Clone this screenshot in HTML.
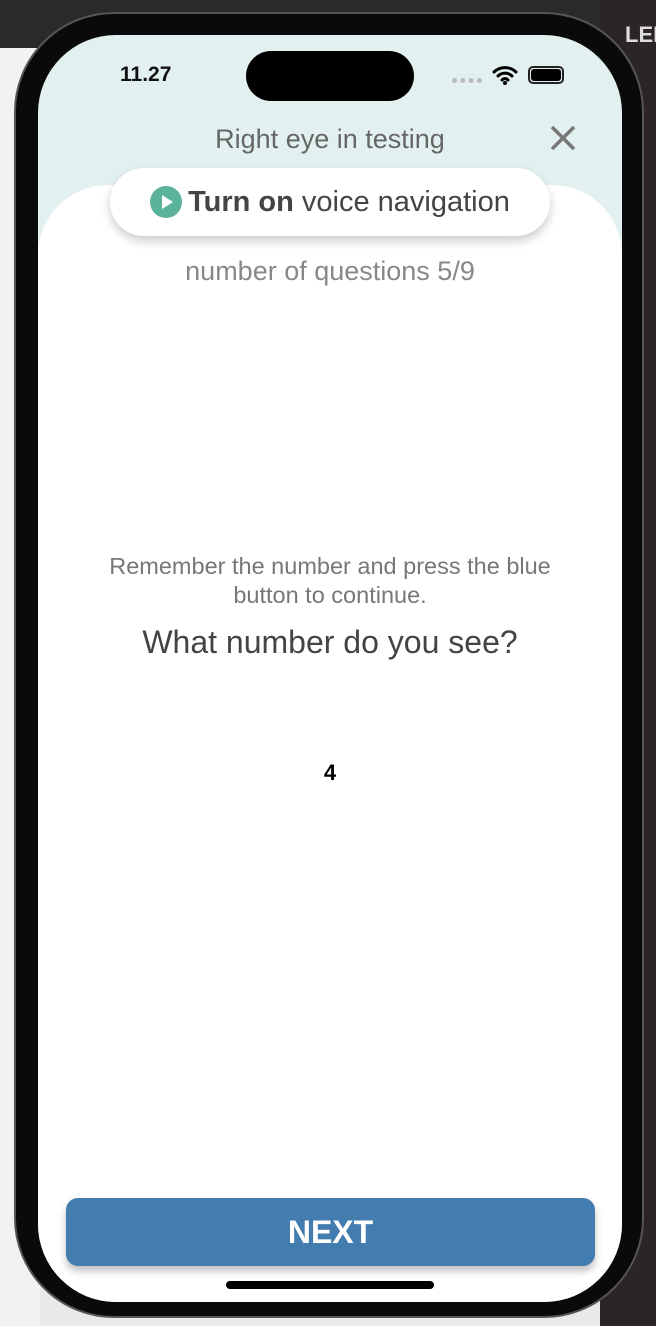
<!DOCTYPE html>
<html><head><style>
*{margin:0;padding:0;box-sizing:border-box}
body{width:656px;height:1326px;overflow:hidden;position:relative;background:#e9e9e9;font-family:"Liberation Sans",sans-serif}
.leftbg{position:absolute;left:0;top:0;width:40px;height:1326px;background:#f2f2f2}
.topbar{position:absolute;left:0;top:0;width:656px;height:48px;background:#2a2a2c}
.rightbg{position:absolute;left:600px;top:0;width:56px;height:1326px;background:#2b2528}
.rt{position:absolute;left:640px;color:#ddd;font-size:22px}
.frame{position:absolute;left:14px;top:12px;width:630px;height:1306px;border-radius:100px;background:#0a0a0a;border:2px solid #555}
.screen{position:absolute;left:38px;top:35px;width:584px;height:1267px;border-radius:78px;background:#e2f1f0;overflow:hidden}
.panel{position:absolute;left:0;top:150px;width:584px;height:1200px;background:#fff;border-radius:70px 70px 0 0}
.island{position:absolute;left:208px;top:16px;width:168px;height:50px;border-radius:25px;background:#000}
.time{position:absolute;left:82px;top:28px;font-size:21px;font-weight:bold;color:#111}
.title{position:absolute;left:0;width:584px;top:89px;text-align:center;font-size:27px;color:#666}
.x{position:absolute;left:510px;top:88px}
.pill{position:absolute;left:72px;top:133px;width:440px;height:68px;border-radius:34px;background:#fff;box-shadow:0 5px 10px rgba(0,0,0,.2);display:flex;align-items:center;justify-content:center;font-size:29px;color:#444}
.play{width:32px;height:32px;border-radius:50%;background:#5cb39c;margin-right:6px;position:relative}
.play:after{content:"";position:absolute;left:12px;top:9px;border-left:11px solid #fff;border-top:7px solid transparent;border-bottom:7px solid transparent}
.c{position:absolute;left:0;width:584px;text-align:center}
.btn{position:absolute;left:28px;top:1163px;width:529px;height:68px;border-radius:12px;background:#437db0;color:#fff;font-weight:bold;font-size:32px;text-align:center;line-height:68px;box-shadow:0 5px 8px rgba(0,0,0,.25)}
.home{position:absolute;left:188px;top:1246px;width:208px;height:8px;border-radius:4px;background:#000}
</style></head><body>
<div class="leftbg"></div><div class="topbar"></div><div class="rightbg"></div>
<div class="rt" style="top:22px;left:625px;font-weight:bold">LEDI</div>
<div class="frame"></div>
<div class="screen">
 <div class="panel"></div>
 <div class="island"></div>
 <div class="time">11.27</div>
 <div style="position:absolute;left:414px;top:43px;width:30px;height:5px;border-top:5px dotted #bbb"></div>
 <svg style="position:absolute;left:454px;top:30px" width="26" height="20" viewBox="0 0 26 20"><path d="M2 7a16 16 0 0 1 22 0M6 11a10 10 0 0 1 14 0M10 15a4 4 0 0 1 6 0" stroke="#000" stroke-width="3" fill="none" stroke-linecap="round"/><circle cx="13" cy="18" r="2"/></svg>
 <div style="position:absolute;left:490px;top:31px;width:36px;height:18px;border-radius:5px;border:2px solid #222;padding:1px"><div style="width:100%;height:100%;background:#000;border-radius:3px"></div></div>
 <div class="title">Right eye in testing</div>
 <svg class="x" width="30" height="30" viewBox="0 0 30 30"><path d="M4 4L26 26M26 4L4 26" stroke="#777" stroke-width="3.5"/></svg>
 <div class="pill"><div class="play"></div><b>Turn on</b>&nbsp;voice navigation</div>
 <div class="c" style="top:221px;font-size:27px;color:#888">number of questions 5/9</div>
 <div class="c" style="top:517px;font-size:23.5px;color:#777;line-height:29px">Remember the number and press the blue<br>button to continue.</div>
 <div class="c" style="top:589px;font-size:32px;color:#444">What number do you see?</div>
 <div class="c" style="top:725px;font-size:22px;font-weight:bold;color:#000">4</div>
 <div class="btn">NEXT</div>
 <div class="home"></div>
</div>
</body></html>
